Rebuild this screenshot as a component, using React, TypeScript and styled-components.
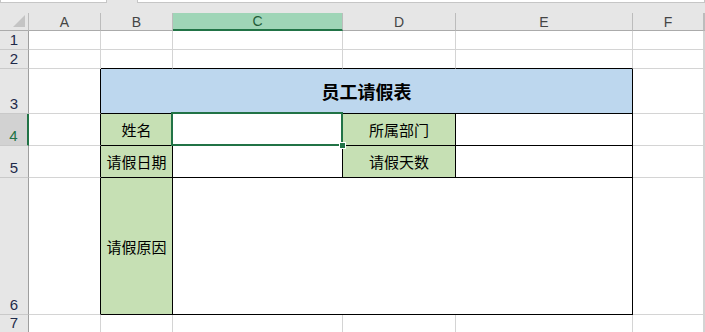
import React from "react";
import styled, { createGlobalStyle, css } from "styled-components";

const GlobalStyle = createGlobalStyle`
	html, body {
		margin: 0;
		padding: 0;
		background: #ffffff;
	}
	* {
		box-sizing: border-box;
	}
`;

const GRID = "#d4d4d4";
const INK = "#000000";
const EXCEL_GREEN = "#217346";

const Sheet = styled.div`
	width: 705px;
	height: 332px;
	overflow: hidden;
	display: grid;
	grid-template-columns: 29px 72px 72px 170px 113px 177px 71px 1fr;
	grid-template-rows: 13px 18px 19px 19px 45px 32px 32px 137px 1fr;
	background: #ffffff;
	font-family: "Noto Sans CJK SC", "Noto Sans", sans-serif;
`;

const TopBar = styled.div`
	grid-column: 1 / -1;
	display: flex;
	gap: 30px;
	background: #e6e6e6;
	align-items: flex-start;
`;

const TopBox = styled.div<{ $width?: number }>`
	height: 3px;
	background: #ffffff;
	border: 1px solid #c6c6c6;
	border-top: none;
	${({ $width }) => ($width ? `width: ${$width}px;` : "flex: 1;")}
`;

const Corner = styled.div`
	background: #e6e6e6;
	border-right: 1px solid #bcbcbc;
	border-bottom: 1px solid #ababab;
	display: flex;
	align-items: flex-end;
	justify-content: flex-end;
	padding: 0 3px 3px 0;
`;

const Triangle = styled.div`
	width: 0;
	height: 0;
	border-left: 12px solid transparent;
	border-bottom: 12px solid #c4c4c4;
`;

const ColHeader = styled.div<{ $active?: boolean }>`
	display: flex;
	align-items: center;
	justify-content: center;
	font-family: "Liberation Sans", Arial, sans-serif;
	font-size: 14px;
	color: #444444;
	background: #e6e6e6;
	border-right: 1px solid #bcbcbc;
	border-bottom: 1px solid #ababab;
	${({ $active }) =>
		$active &&
		css`
			background: #9fd5b7;
			color: #1f5c3a;
			border-bottom: 2px solid ${EXCEL_GREEN};
		`}
`;

const RowHeader = styled.div<{ $active?: boolean }>`
	display: flex;
	align-items: flex-end;
	justify-content: center;
	padding-bottom: 1px;
	font-family: "Liberation Sans", Arial, sans-serif;
	font-size: 15px;
	line-height: 16px;
	color: #1e2a4a;
	background: #e6e6e6;
	border-right: 1px solid #9e9e9e;
	border-bottom: 1px solid #c9c9c9;
	${({ $active }) =>
		$active &&
		css`
			background: #d2d2d2;
			color: ${EXCEL_GREEN};
			border-right: 2px solid ${EXCEL_GREEN};
		`}
`;

const Cell = styled.div<{ $span?: number; $inkRight?: boolean; $inkBottom?: boolean }>`
	position: relative;
	border-right: 1px solid ${({ $inkRight }) => ($inkRight ? INK : GRID)};
	border-bottom: 1px solid ${({ $inkBottom }) => ($inkBottom ? INK : GRID)};
	${({ $span }) => $span && `grid-column: span ${$span};`}
`;

const TableCell = styled(Cell).attrs({ $inkRight: true, $inkBottom: true })<{
	$fill?: "title" | "label";
	$selected?: boolean;
}>`
	display: flex;
	align-items: center;
	justify-content: center;
	color: #000000;
	font-size: 15px;
	background: ${({ $fill }) =>
		$fill === "title" ? "#bdd7ee" : $fill === "label" ? "#c6e0b4" : "#ffffff"};
	${({ $fill }) =>
		$fill === "title" &&
		css`
			font-size: 18px;
			font-weight: 700;
		`}
	${({ $selected }) => $selected && "z-index: 2;"}
`;

const Selection = styled.div`
	position: absolute;
	left: -2px;
	top: -2px;
	right: -1px;
	bottom: -1px;
	border: 2px solid ${EXCEL_GREEN};
	pointer-events: none;
`;

const FillHandle = styled.div`
	position: absolute;
	right: -5px;
	bottom: -5px;
	width: 7px;
	height: 7px;
	background: ${EXCEL_GREEN};
	border: 1px solid #ffffff;
`;

const columns = ["A", "B", "C", "D", "E", "F"];

const App: React.FC = () => {
	return (
		<>
			<GlobalStyle />
			<Sheet>
				<TopBar>
					<TopBox $width={107} />
					<TopBox />
				</TopBar>

				<Corner>
					<Triangle />
				</Corner>
				{columns.map((c) => (
					<ColHeader key={c} $active={c === "C"}>
						{c}
					</ColHeader>
				))}
				<ColHeader />

				{/* row 1 */}
				<RowHeader>1</RowHeader>
				{columns.map((c) => (
					<Cell key={c} />
				))}
				<Cell />

				{/* row 2 */}
				<RowHeader>2</RowHeader>
				<Cell />
				<Cell $inkBottom />
				<Cell $inkBottom />
				<Cell $inkBottom />
				<Cell $inkBottom />
				<Cell />
				<Cell />

				{/* row 3 */}
				<RowHeader>3</RowHeader>
				<Cell $inkRight />
				<TableCell $span={4} $fill="title">
					员工请假表
				</TableCell>
				<Cell />
				<Cell />

				{/* row 4 */}
				<RowHeader $active>4</RowHeader>
				<Cell $inkRight />
				<TableCell $fill="label">姓名</TableCell>
				<TableCell $selected>
					<Selection>
						<FillHandle />
					</Selection>
				</TableCell>
				<TableCell $fill="label">所属部门</TableCell>
				<TableCell />
				<Cell />
				<Cell />

				{/* row 5 */}
				<RowHeader>5</RowHeader>
				<Cell $inkRight />
				<TableCell $fill="label">请假日期</TableCell>
				<TableCell />
				<TableCell $fill="label">请假天数</TableCell>
				<TableCell />
				<Cell />
				<Cell />

				{/* row 6 */}
				<RowHeader>6</RowHeader>
				<Cell $inkRight />
				<TableCell $fill="label">请假原因</TableCell>
				<TableCell $span={3} />
				<Cell />
				<Cell />

				{/* row 7 */}
				<RowHeader>7</RowHeader>
				{columns.map((c) => (
					<Cell key={c} />
				))}
				<Cell />
			</Sheet>
		</>
	);
};

export default App;
